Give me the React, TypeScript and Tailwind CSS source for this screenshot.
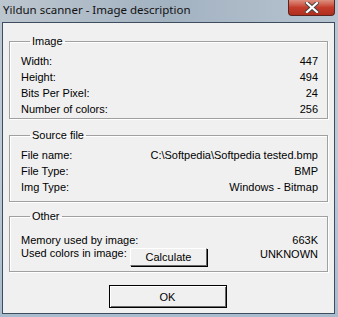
import React from "react";

const rows1 = [
    ["Width:", "447"],
    ["Height:", "494"],
    ["Bits Per Pixel:", "24"],
    ["Number of colors:", "256"],
];

const rows2 = [
    ["File name:", "C:\\Softpedia\\Softpedia tested.bmp"],
    ["File Type:", "BMP"],
    ["Img Type:", "Windows - Bitmap"],
];

function Group({ title, className, children }: { title: string; className: string; children: React.ReactNode }) {
    return (
        <fieldset
            className={
                "mx-[6px] border border-[#a0a0a0] px-[11px] pr-[9px] shadow-[inset_1px_1px_0_#fff,1px_1px_0_#fff] " +
                className
            }
        >
            <legend className="ml-[9px] px-[2px] leading-[13px]">{title}</legend>
            {children}
        </fieldset>
    );
}

function Row({ label, value }: { label: string; value: string }) {
    return (
        <div className="flex h-[16px] items-center justify-between leading-[13px]">
            <span>{label}</span>
            <span>{value}</span>
        </div>
    );
}

export default function App() {
    return (
        <div className="w-[338px] h-[317px] flex flex-col bg-gradient-to-b from-[#b9c6d2] via-[#bccad7] to-[#a9bccd] font-['Liberation_Sans',sans-serif] text-[11px] text-black">
            <div className="h-[22px] flex items-start justify-between bg-gradient-to-r from-[#bcc6cf] via-[#a3b2c1] to-[#b7c4d1]">
                <span className="ml-[3px] mt-[2px] text-[11.5px] leading-[16px] font-['Noto_Sans',sans-serif] text-[#111]">
                    Yildun scanner - Image description
                </span>
                <div className="mr-[3px] w-[47px] h-[16px] rounded-b-[4px] border border-t-0 border-[#5a2520] bg-gradient-to-b from-[#dc8f80] via-[#c43c2c] to-[#b02e1f] flex items-center justify-center">
                    <svg width="14" height="11" viewBox="0 0 14 11">
                        <path d="M2 1 L12 10 M12 1 L2 10" stroke="#444" strokeWidth="4" strokeLinecap="square" />
                        <path d="M2 1 L12 10 M12 1 L2 10" stroke="#fff" strokeWidth="2.2" strokeLinecap="square" />
                    </svg>
                </div>
            </div>
            <div className="ml-[2px] mr-[3px] h-[292px] border border-[#3d4d5e] bg-[#f0f0f0] flex flex-col">
                <Group title="Image" className="mt-[12px] pt-[5px] pb-[1px]">
                    {rows1.map(([l, v]) => (
                        <Row key={l} label={l} value={v} />
                    ))}
                </Group>
                <Group title="Source file" className="mt-[10px] pt-[5px] pb-[6px]">
                    {rows2.map(([l, v]) => (
                        <Row key={l} label={l} value={v} />
                    ))}
                </Group>
                <Group title="Other" className="mt-[8px] pt-[9px] pb-[5px]">
                    <Row label="Memory used by image:" value="663K" />
                    <div className="flex h-[18px] items-start justify-between leading-[13px]">
                        <span className="mt-[-1px] w-[109px]">Used colors in image:</span>
                        <button className="h-[18px] w-[77px] border border-t-white border-l-white border-r-[#696969] border-b-[#696969] bg-[#f0f0f0] leading-[14px] shadow-[1px_1px_0_#000]">
                            Calculate
                        </button>
                        <span className="ml-auto">UNKNOWN</span>
                    </div>
                </Group>
                <div className="mt-[13px] flex justify-center pr-[2px]">
                    <button className="h-[23px] w-[118px] border border-[#000] bg-[#f0f0f0] leading-[16px] shadow-[inset_1px_1px_0_#fff,inset_-1px_-1px_0_#696969]">
                        OK
                    </button>
                </div>
            </div>
        </div>
    );
}
